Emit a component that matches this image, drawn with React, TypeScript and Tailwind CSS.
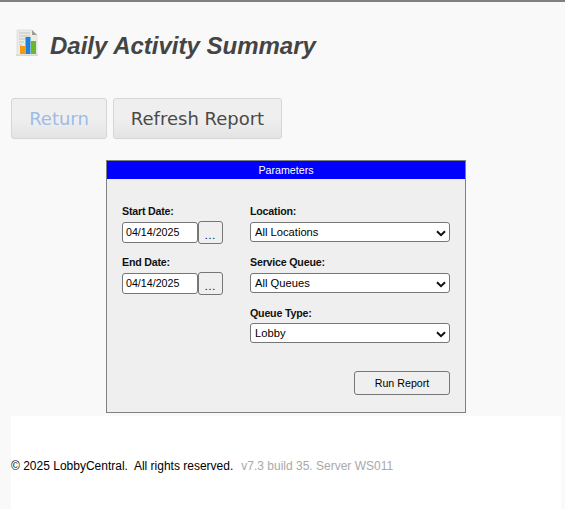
import React from "react";

const arial = "font-['Liberation_Sans',Arial,sans-serif]";

function ReportIcon() {
  return (
    <svg width="24" height="28" viewBox="0 0 24 28" className="block">
      <rect x="1" y="25" width="22" height="2" fill="#dcdcd6" />
      <path d="M2 1h15l5 5v20H2z" fill="#ecebe6" stroke="#d4d4cf" strokeWidth="0.6" />
      <path d="M17 1l5 5h-5z" fill="#9a9a96" />
      <path d="M4 4h11M4 7h11M4 10h6M4 13h5M4 16h3" stroke="#c4c4c0" strokeWidth="1" />
      <rect x="5" y="17" width="5" height="8" fill="#f39a14" />
      <rect x="10.5" y="8" width="5" height="17" fill="#1a84d6" />
      <rect x="16" y="12" width="5" height="13" fill="#6cb52c" />
    </svg>
  );
}

function DateField({ label }: { label: string }) {
  return (
    <div className="flex flex-col">
      <label className="text-[10.67px] tracking-[-0.2px] font-bold leading-[12px] text-[#111] h-[15px]">{label}</label>
      <div className="flex items-start mt-[2px]">
        <input
          readOnly
          value="04/14/2025"
          className="w-[76px] h-[21px] bg-white border border-[#767676] rounded-[3px] px-[3px] pb-[2px] text-[10.67px] text-black outline-none"
        />
        <button className="w-[25px] h-[23px] -mt-px bg-[#efefef] border border-[#767676] rounded-[3px] text-[10.67px] tracking-[0.8px] text-black leading-[22px] pt-[2px]">
          ...
        </button>
      </div>
    </div>
  );
}

function SelectField({ label, value, labelHeight = "h-[15px]" }: { label: string; value: string; labelHeight?: string }) {
  return (
    <div className="flex flex-col">
      <label className={`text-[10.67px] tracking-[-0.2px] font-bold leading-[12px] text-[#111] ${labelHeight}`}>{label}</label>
      <div className="relative mt-[2px] w-[200px] h-[20px] bg-white border border-[#767676] rounded-[3px]">
        <select
          className="block w-full h-[18px] appearance-none bg-transparent pl-[4px] py-0 text-[11.2px] leading-[18px] text-black outline-none"
          defaultValue={value}
        >
          <option>{value}</option>
        </select>
        <svg width="10" height="7" viewBox="0 0 10 7" className="absolute right-[3px] top-[6.5px] pointer-events-none">
          <path d="M1 1.2l4 4 4-4" fill="none" stroke="#111" strokeWidth="2" />
        </svg>
      </div>
    </div>
  );
}

export default function App() {
  return (
    <div className={`h-[509px] w-[565px] overflow-hidden bg-[#f9f9f9] border-t-2 border-[#808080] ${arial}`}>
      <div className="flex items-start h-[96px]">
        <div className="ml-[15px] mt-[27px]">
          <ReportIcon />
        </div>
        <h1 className="ml-[11px] mt-[29px] text-[24px] leading-[30px] font-bold italic text-[#444]">Daily Activity Summary</h1>
      </div>

      <div className="flex gap-[6px] pl-[11px] font-['DejaVu_Sans',Verdana,sans-serif] text-[18px]">
        <button className="w-[96px] h-[41px] rounded-[3px] border border-[#d6d6d6] bg-gradient-to-b from-[#efefef] from-50% to-[#e4e4e4] text-[#9dbbe6]">
          Return
        </button>
        <button className="w-[169px] h-[41px] rounded-[3px] border border-[#d6d6d6] bg-gradient-to-b from-[#efefef] from-50% to-[#e4e4e4] text-[#4a4a4a]">
          Refresh Report
        </button>
      </div>

      <div className="ml-[106px] mt-[21px] w-[360px] h-[253px] border border-[#808080] bg-[#efefef]">
        <div className="h-[18px] bg-[#0000ff] text-white text-[10.67px] leading-[18px] text-center">Parameters</div>
        <div className="relative flex pl-[15px] pt-[26px]">
          <div className="flex flex-col gap-[12px] w-[128px]">
            <DateField label="Start Date:" />
            <DateField label="End Date:" />
          </div>
          <div className="flex flex-col gap-[14px]">
            <SelectField label="Location:" value="All Locations" />
            <SelectField label="Service Queue:" value="All Queues" />
            <SelectField label="Queue Type:" value="Lobby" labelHeight="h-[14px]" />
            <div className="flex justify-end mt-[14px]">
              <button className="w-[96px] h-[24px] bg-[#efefef] border border-[#767676] rounded-[3px] text-[10.67px] text-black">
                Run Report
              </button>
            </div>
          </div>
        </div>
      </div>

      <div className="ml-[11px] mt-[3px] w-[550px] h-[93px] bg-white pt-[43px] text-[12px] leading-[14px] text-black whitespace-pre">
        <span>© 2025 LobbyCentral.  All rights reserved.</span>
        <span className="ml-[8px] text-[#a9a9a9]">v7.3 build 35. Server WS011</span>
      </div>
    </div>
  );
}
